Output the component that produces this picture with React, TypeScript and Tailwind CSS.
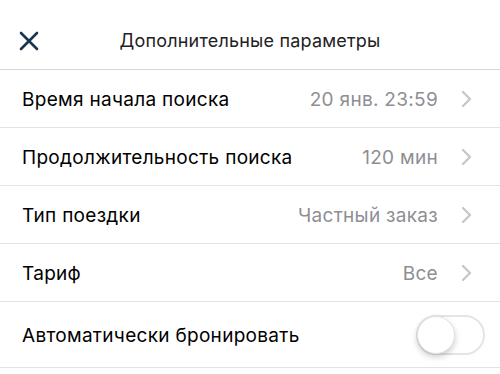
import { useState } from "react";

const rows = [
  { label: "Время начала поиска", value: "20 янв. 23:59" },
  { label: "Продолжительность поиска", value: "120 мин" },
  { label: "Тип поездки", value: "Частный заказ" },
  { label: "Тариф", value: "Все" },
];

const Chevron = () => (
  <svg width="11" height="18" viewBox="0 0 11 18" fill="none" className="shrink-0">
    <path d="M2 2l7 7-7 7" stroke="#c7c7cc" strokeWidth="2.4" strokeLinecap="round" strokeLinejoin="round" />
  </svg>
);

const App = () => {
  const [autoBook, setAutoBook] = useState(false);

  return (
    <div className="w-[500px] h-[374px] bg-white overflow-hidden font-['Inter',sans-serif] text-black">
      <div className="relative flex items-center justify-center h-[70px] border-b border-[#d6d6d6]">
        <button className="absolute left-[18px] top-[30px] p-0">
          <svg width="22" height="22" viewBox="0 0 22 22" fill="none">
            <path d="M3 3l16 16M19 3L3 19" stroke="#1b3550" strokeWidth="2.6" strokeLinecap="round" />
          </svg>
        </button>
        <span className="text-[18px] tracking-[0.2px] mt-[11px] text-[#222]">Дополнительные параметры</span>
      </div>
      {rows.map((row) => (
        <div key={row.label} className="flex items-center h-[58px] pl-[22px] pr-[28px] border-b border-[#e3e3e3]">
          <span className="flex-1 mt-[3px] text-[19px] tracking-[0.3px]">{row.label}</span>
          <span className="mt-[3px] text-[19px] tracking-[0.3px] text-[#8e8e93] mr-[23px]">{row.value}</span>
          <Chevron />
        </div>
      ))}
      <div className="flex items-center h-[66px] pl-[22px] pr-[15px] border-b border-[#e3e3e3]">
        <span className="flex-1 mt-[3px] text-[19px] tracking-[0.3px]">Автоматически бронировать</span>
        <button
          onClick={() => setAutoBook(!autoBook)}
          className={
            autoBook
              ? "relative w-[69px] h-[40px] rounded-full bg-[#4cd964] border-2 border-[#4cd964]"
              : "relative w-[69px] h-[40px] rounded-full bg-white border-2 border-[#e5e5e5]"
          }
        >
          <span
            className={
              autoBook
                ? "absolute top-[-1px] right-[-1px] w-[38px] h-[38px] rounded-full bg-white shadow-[0_3px_6px_rgba(0,0,0,0.2)]"
                : "absolute top-[-1px] left-[-1px] w-[38px] h-[38px] rounded-full bg-white border border-[#e2e2e2] shadow-[0_3px_6px_rgba(0,0,0,0.2)]"
            }
          />
        </button>
      </div>
    </div>
  );
};

export default App;
